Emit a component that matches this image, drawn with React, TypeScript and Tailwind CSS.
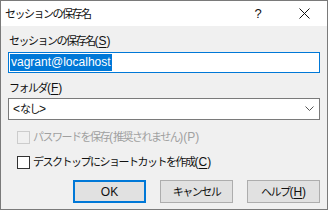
import React from "react";

function J({ children }: { children: React.ReactNode }) {
  return <span className="text-[11px] tracking-[-1.5px]">{children}</span>;
}

function U({ c }: { c: string }) {
  return (
    <>
      (<span className="underline underline-offset-2">{c}</span>)
    </>
  );
}

export default function App() {
  return (
    <div className="w-[328px] h-[210px] flex flex-col border border-[#7a7a7a] bg-[#f0f0f0] text-[12px] leading-[16px] text-[#111] overflow-hidden font-['Liberation_Sans','Noto_Sans_CJK_JP',sans-serif]">
      <div className="h-[25px] bg-white flex items-center shrink-0">
        <div className="pl-[4px] flex-1">
          <J>セッションの保存名</J>
        </div>
        <div className="w-[46px] flex justify-center text-[13px]">?</div>
        <div className="w-[46px] flex justify-center">
          <svg width="11" height="11" viewBox="0 0 11 11">
            <path d="M0.5 0.5 L10.5 10.5 M10.5 0.5 L0.5 10.5" stroke="#111" strokeWidth="1" />
          </svg>
        </div>
      </div>
      <div className="flex flex-col px-[7px] pt-[7px]">
        <div className="pl-[1px]">
          <J>セッションの保存名</J>
          <U c="S" />
        </div>
        <div className="mt-[3px] h-[21px] border border-[#0078d7] bg-white flex items-center px-[1px]">
          <span className="bg-[#0078d7] text-white leading-[17px] px-[1px]">vagrant@localhost</span>
        </div>
        <div className="mt-[7px] pl-[1px]">
          <J>フォルダ</J>
          <U c="F" />
        </div>
        <div className="mt-[2px] h-[22px] border border-[#7a7a7a] bg-white flex items-center pl-[4px] pr-[5px]">
          <span className="flex-1">
            &lt;<J>なし</J>&gt;
          </span>
          <svg width="9" height="6" viewBox="0 0 9 6">
            <path d="M0.5 0.5 L4.5 4.5 L8.5 0.5" fill="none" stroke="#555" strokeWidth="1" />
          </svg>
        </div>
        <div className="mt-[9px] flex items-center pl-[9px] h-[16px] text-[#a0a0a0]">
          <div className="w-[13px] h-[13px] border border-[#cccccc] bg-[#f0f0f0] mr-[3px]" />
          <span>
            <J>パスワードを保存</J>(<J>推奨されません</J>)(P)
          </span>
        </div>
        <div className="mt-[9px] flex items-center pl-[9px] h-[16px]">
          <div className="w-[13px] h-[13px] border border-[#333] bg-white mr-[3px]" />
          <span>
            <J>デスクトップにショートカットを作成</J>
            <U c="C" />
          </span>
        </div>
        <div className="mt-[10px] flex justify-end gap-[14px]">
          <div className="w-[73px] h-[23px] border-2 border-[#0078d7] bg-[#e1e1e1] flex items-center justify-center">
            OK
          </div>
          <div className="w-[73px] h-[23px] border border-[#adadad] bg-[#e1e1e1] flex items-center justify-center">
            <J>キャンセル</J>
          </div>
          <div className="w-[73px] h-[23px] border border-[#adadad] bg-[#e1e1e1] flex items-center justify-center">
            <J>ヘルプ</J>
            <U c="H" />
          </div>
        </div>
      </div>
    </div>
  );
}
